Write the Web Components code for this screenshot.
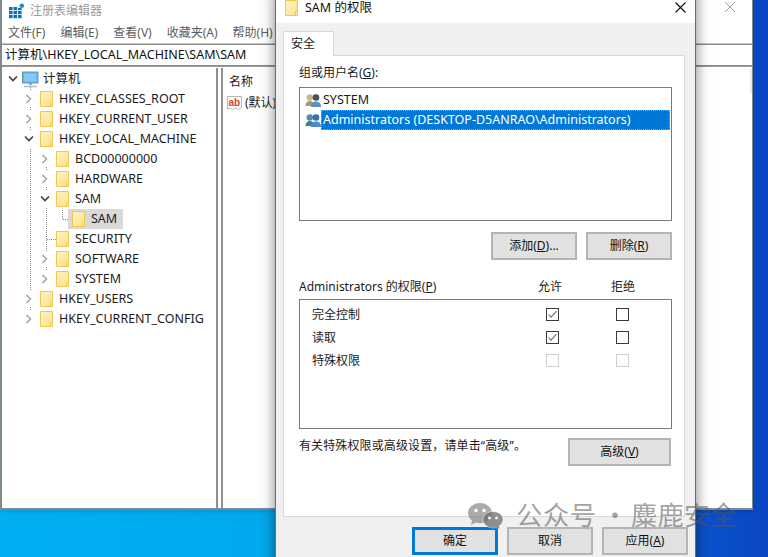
<!DOCTYPE html>
<html lang="zh-CN"><head><meta charset="utf-8"><title>SAM 的权限</title>
<style>
html,body{margin:0;padding:0;width:768px;height:557px;overflow:hidden}
body{font:12.5px/16px "Noto Sans","Noto Sans CJK SC",sans-serif;color:#1a1a1a}
</style></head><body>
<win-desktop>
  <reg-window></reg-window>
  <perm-dialog></perm-dialog>
  <water-mark></water-mark>
</win-desktop>
<script>
const def=(name,css,html)=>customElements.define(name,class extends HTMLElement{
  connectedCallback(){ if(this.shadowRoot) return;
    const r=this.attachShadow({mode:'open'});
    const a=k=>this.getAttribute(k)||'';
    r.innerHTML=`<style>${css}</style>`+(typeof html==='function'?html(a,this):html);
  }});

def('win-desktop',`:host{display:block;position:relative;width:768px;height:557px;overflow:hidden;
  background:linear-gradient(90deg,#00b0f2 0,#00a9ee 270px,#0a64d6 600px,#0a46c4 768px)}`,`<slot></slot>`);

def('folder-icon',`:host{display:block;width:14px;height:16px;flex:none}svg{display:block}`,
`<svg width="14" height="16" viewBox="0 0 14 16"><defs><linearGradient id="g" x1="0" y1="0" x2="1" y2="1"><stop offset="0" stop-color="#fff3c4"/><stop offset="1" stop-color="#fde08a"/></linearGradient></defs>
<path d="M.5.5h12v15H.5z" fill="url(#g)" stroke="#eec84f"/><path d="M10.500 15.500v-4h2.500" fill="#fbe9a8" stroke="#eec84f"/></svg>`);

def('tree-row',`:host{display:flex;align-items:center;height:20px;white-space:nowrap;color:#1c1c1c;font-size:12.500px}
.c{width:14px;flex:none;display:flex;justify-content:center}
.lab{margin-left:5px;padding-right:6px}
:host([sel]) .wrap{background:#d9d9d9}
.wrap{display:flex;align-items:center;height:20px;padding-left:4px}
svg{display:block}`,
(a)=>{
  const lvl=+a('level')||0, st=a('state');
  const pad=(lvl*16)+20;
  const chev= st==='open'
   ? `<svg width="10" height="8" viewBox="0 0 10 8"><path d="M1 1.500 5 5.500 9 1.500" fill="none" stroke="#404040" stroke-width="1.600"/></svg>`
   : st==='closed' ? `<svg width="8" height="10" viewBox="0 0 8 10"><path d="M1.500 1 5.500 5 1.500 9" fill="none" stroke="#a8a8a8" stroke-width="1.600"/></svg>` : '';
  return `<div class="c" style="margin-left:${pad}px">${chev}</div>
  <div class="wrap"><folder-icon></folder-icon><span class="lab">${a('label')}</span></div>`;
});

def('reg-window',`:host{display:flex;flex-direction:column;position:absolute;left:0;top:-1px;width:753px;height:511px;box-sizing:border-box;
  background:#fff;border:solid #7d8a92;border-width:0 1px 2px 2px;box-shadow:0 0 6px rgba(0,0,0,.25)}
.title{height:23px;flex:none;display:flex;align-items:center;position:relative;color:#9b9b9b;font-size:12px;padding-left:7px;gap:5px}
.title .x{position:absolute;left:722px;top:2px}
.menu{height:22px;flex:none;display:flex;align-items:center;gap:15px;padding-left:6px;color:#5c5c5c;font-size:12px}
.addr{height:20px;flex:none;border:solid #8a8a8a;border-width:1px 0 1px;display:flex;align-items:center;padding-left:3px;color:#111;font-size:12.500px;white-space:nowrap;box-shadow:0 1px 0 #9a9a9a,0 -1px 0 #c4c4c4}
.body{flex:1;display:flex;min-height:0;margin-top:2px}
.tree{flex:none;border-right:2px solid #8f8f94;position:relative;padding-top:1px;box-sizing:border-box;width:216px}
.tree svg.lines{position:absolute;left:0;top:1px}
.split{width:3px;flex:none;border-right:2px solid #8f8f94;background:#fff}
.list{flex:1;position:relative;padding:5px 0 0 6px;font-size:12px;color:#222}
.hd{height:17px;display:flex;align-items:center}
.val{display:flex;align-items:center;gap:2px;margin-top:5px;margin-left:-2px;white-space:nowrap}
.sb{position:absolute;right:0;top:1px;width:2px;height:24px;background:#e8e8e8}
.root{display:flex;align-items:center;height:20px;white-space:nowrap;font-size:12.500px;color:#1c1c1c}
`,
()=>`<div class="title">
<svg width="16" height="16" viewBox="0 0 16 16"><g fill="#0a72b8"><rect x="0" y="4" width="3.600" height="3.200"/><rect x="4.500" y="4" width="3.600" height="3.200"/><rect x="9" y="5" width="3.600" height="2.200"/><rect x="0" y="8" width="3.600" height="3.200"/><rect x="4.500" y="8" width="3.600" height="3.200"/><rect x="9" y="8" width="3.600" height="3.200"/><rect x="0" y="12" width="3.600" height="3.200"/><rect x="4.500" y="12" width="3.600" height="3.200"/><rect x="9" y="12" width="3.600" height="3.200"/></g><circle cx="12.800" cy="2.800" r="2.300" fill="#1e8fd0"/></svg>
<span>注册表编辑器</span>
<svg class="x" width="12" height="12" viewBox="0 0 12 12"><path d="M1 1 11 11M11 1 1 11" stroke="#a0a0a0" stroke-width="1"/></svg>
</div>
<div class="menu"><span>文件(F)</span><span>编辑(E)</span><span>查看(V)</span><span>收藏夹(A)</span><span>帮助(H)</span></div>
<div class="addr">计算机\\HKEY_LOCAL_MACHINE\\SAM\\SAM</div>
<div class="body">
<div class="tree">
<svg class="lines" width="214" height="300" viewBox="0 0 214 300" fill="none" stroke="#8a8a8a" stroke-dasharray="1 1">
<path d="M28.500 18v4M28.500 38v4M28.500 58v4M28.500 80v142M28.500 238v4M44.500 98v4M44.500 118v4M44.500 139v43M45 170.500h9M60.500 141v9M61 150.500h6M44.500 198v4"/>
</svg>
<div class="root"><svg style="margin-left:6px;flex:none" width="10" height="8" viewBox="0 0 10 8"><path d="M1 1.500 5 5.500 9 1.500" fill="none" stroke="#404040" stroke-width="1.600"/></svg>
<svg style="margin-left:4px;flex:none" width="17" height="17" viewBox="0 0 17 17"><rect x=".5" y="1" width="15.500" height="11" fill="#5bb8ee" stroke="#6f95ad"/><rect x="2" y="2.500" width="12.500" height="8" fill="#7ecbf5"/><path d="M7 12h3v2H7z" fill="#8aa5b5"/><path d="M2 15.500h13" stroke="#a9bcc8" stroke-width="1.500"/></svg>
<span style="margin-left:4px;">计算机</span></div>
<tree-row level="0" state="closed" label="HKEY_CLASSES_ROOT"></tree-row>
<tree-row level="0" state="closed" label="HKEY_CURRENT_USER"></tree-row>
<tree-row level="0" state="open" label="HKEY_LOCAL_MACHINE"></tree-row>
<tree-row level="1" state="closed" label="BCD00000000"></tree-row>
<tree-row level="1" state="closed" label="HARDWARE"></tree-row>
<tree-row level="1" state="open" label="SAM"></tree-row>
<tree-row level="2" sel label="SAM"></tree-row>
<tree-row level="1" label="SECURITY"></tree-row>
<tree-row level="1" state="closed" label="SOFTWARE"></tree-row>
<tree-row level="1" state="closed" label="SYSTEM"></tree-row>
<tree-row level="0" state="closed" label="HKEY_USERS"></tree-row>
<tree-row level="0" state="closed" label="HKEY_CURRENT_CONFIG"></tree-row>
</div>
<div class="split"></div>
<div class="list"><div class="hd">名称</div>
<div class="val"><svg width="16" height="15" viewBox="0 0 16 15"><path d="M.5.500h14v11l-3 2-3-1.500-3 1.500-3-1.500-2 1z" fill="#fff" stroke="#b8b8b8"/><text x="1.500" y="10" font-family="Liberation Sans,sans-serif" font-weight="700" font-size="10" fill="#d8452a">ab</text></svg><span>(默认)</span></div>
<div class="sb"></div></div>
</div>`);

def('win-button',`:host{display:flex;align-items:center;justify-content:center;box-sizing:border-box;width:86px;height:28px;background:#e1e1e1;border:2px solid #b4b4b4;color:#111;font-size:12px;flex:none;white-space:nowrap}
:host([primary]){border:3px solid #0078d7}`,`<span><slot></slot></span>`);

def('win-check',`:host{display:block;width:13px;height:13px;flex:none}svg{display:block}`,
(a,el)=>{const d=el.hasAttribute('disabled'),c=el.hasAttribute('checked');
 return `<svg width="13" height="13" viewBox="0 0 13 13"><rect x=".5" y=".5" width="12" height="12" fill="#fff" stroke="${d?'#cfcfcf':'#3a3a3a'}"/>${c?'<path d="M2.500 6.500 5 9.200 10.500 3.200" fill="none" stroke="#6a6a6a" stroke-width="1.100"/>':''}</svg>`});

def('perm-row',`:host{display:flex;align-items:center;height:23px;font-size:12px;color:#1a1a1a}
.l{width:246px;padding-left:12px;box-sizing:border-box;flex:none}
.g{width:70px;flex:none}`,
(a)=>{const f=n=>{const v=a(n);return `<win-check ${v.includes('c')?'checked':''} ${v.includes('d')?'disabled':''}></win-check>`};
 return `<span class="l">${a('label')}</span><span class="g">${f('allow')}</span><span>${f('deny')}</span>`});

def('user-icon',`:host{display:block;width:16px;height:15px;flex:none}svg{display:block}`,
(a)=>{const c=a('kind')==='sys'?['#c9b98a','#9aa06a','#4a4f58','#5b90c4']:['#4f8fa8','#3f7f96','#3f6fa8','#4a8ad0'];
return `<svg width="16" height="15" viewBox="0 0 16 15"><circle cx="4.800" cy="4.500" r="3.200" fill="${c[0]}"/><path d="M.5 13c0-3.500 2-5 4.300-5s4.300 1.500 4.300 5z" fill="${c[1]}"/><circle cx="11" cy="4.500" r="3.300" fill="${c[2]}"/><path d="M6 14c0-4 2.200-5.500 5-5.500s5 1.500 5 5.500z" fill="${c[3]}"/></svg>`});

def('user-row',`:host{display:flex;align-items:center;height:20px;font-size:12.500px;color:#1a1a1a;white-space:nowrap}
.ic{margin:0 0 0 5px}
.t{flex:1;height:20px;display:flex;align-items:center;padding-left:2px;margin-right:1px}
:host([sel]) .t{background:#0078d7;color:#fff;outline:1px dotted #d8a24c;outline-offset:-1px}`,
(a)=>`<user-icon class="ic" kind="${a('kind')}"></user-icon><div class="t">${a('label')}</div>`);

def('perm-dialog',`:host{display:flex;flex-direction:column;position:absolute;left:275px;top:-10px;width:421px;height:580px;box-sizing:border-box;background:#f0f0f0;border:1px solid #6d6d6d;box-shadow:0 0 13px rgba(0,0,0,.5);font-size:12px}
.title{height:32px;flex:none;background:#fff;display:flex;align-items:flex-end;position:relative;padding:0 0 7px 9px;box-sizing:border-box;gap:6px;font-size:12.500px;color:#111}
.title .x{position:absolute;right:9px;top:11px}
.tabs{height:32px;flex:none;display:flex;align-items:flex-end;padding-left:7px}
.tab{width:51px;height:25px;box-sizing:border-box;background:#fff;border:1px solid #d9d9d9;border-bottom:0;padding:4px 0 0 7px;margin-bottom:-1px;position:relative;z-index:1;font-size:12px}
.panel{margin:0 10px 0 7px;height:462px;flex:none;box-sizing:border-box;background:#fff;border:1px solid #d9d9d9;padding:9px 12px 0 15px;display:flex;flex-direction:column}
.lbl{height:16px;line-height:16px;flex:none}
.box{border:1px solid #7a7a7a;box-sizing:border-box;background:#fff;flex:none}
.users{margin-top:6px;height:134px;padding-top:2px}
.btns{display:flex;gap:9px;justify-content:flex-end;margin-top:11px;flex:none}
.ph{display:flex;margin-top:19px;height:16px;align-items:center;flex:none}
.ph .a{width:239px}.ph .b{width:73px}
.perms{margin-top:4px;height:130px;padding-top:3px}
.adv{display:flex;justify-content:space-between;margin-top:9px;flex:none;padding-right:1px}
.adv span{letter-spacing:.12px}
.adv win-button{width:103px}
.foot{flex:1;display:flex;justify-content:flex-end;gap:9px;padding:10px 7px 0 0}`,
()=>`<div class="title"><folder-icon></folder-icon><span>SAM 的权限</span>
<svg class="x" width="11" height="11" viewBox="0 0 11 11"><path d="M.5.500 10.500 10.500M10.500.500.500 10.500" stroke="#111" stroke-width="1.100"/></svg></div>
<div class="tabs"><div class="tab">安全</div></div>
<div class="panel">
<div class="lbl">组或用户名(<u>G</u>):</div>
<div class="box users">
 <user-row kind="sys" label="SYSTEM"></user-row>
 <user-row kind="adm" sel label="Administrators (DESKTOP-D5ANRAO\\Administrators)"></user-row>
</div>
<div class="btns"><win-button>添加(<u>D</u>)...</win-button><win-button>删除(<u>R</u>)</win-button></div>
<div class="ph"><span class="a">Administrators 的权限(<u>P</u>)</span><span class="b">允许</span><span>拒绝</span></div>
<div class="box perms">
 <perm-row label="完全控制" allow="c" deny=""></perm-row>
 <perm-row label="读取" allow="c" deny=""></perm-row>
 <perm-row label="特殊权限" allow="d" deny="d"></perm-row>
</div>
<div class="adv"><span>有关特殊权限或高级设置，请单击“高级”。</span><win-button>高级(<u>V</u>)</win-button></div>
</div>
<div class="foot"><win-button primary>确定</win-button><win-button>取消</win-button><win-button>应用(<u>A</u>)</win-button></div>`);

def('water-mark',`:host{position:absolute;left:467px;top:498px;display:flex;align-items:center;gap:12px;pointer-events:none;height:32px;white-space:nowrap;color:rgba(85,85,85,.55);font:26.400px/32px "Noto Sans CJK SC",sans-serif}
svg{display:block;flex:none;margin-top:4px}.dot{margin:0 3px 0 5px}.a{letter-spacing:.5px}`,
`<svg width="37" height="30" viewBox="0 0 37 30"><path d="M13 2C6.400 2 1 6.400 1 12c0 3 1.600 5.700 4 7.500L4 24l4.800-2.400c1.300.4 2.700.6 4.200.6 6.600 0 12-4.500 12-10.100S19.600 2 13 2z" fill="rgba(120,120,120,.62)"/><circle cx="9" cy="9.500" r="1.700" fill="#fff"/><circle cx="17" cy="9.500" r="1.700" fill="#fff"/><path d="M26 10.500c-5.500 0-10 3.600-10 8.200s4.500 8.200 10 8.200c1.100 0 2.200-.2 3.200-.4l3.800 2-.9-3.500c2.400-1.500 3.900-3.800 3.900-6.300 0-4.600-4.500-8.200-10-8.200z" fill="rgba(110,110,110,.75)" stroke="#fff" stroke-opacity=".6" stroke-width=".8"/><circle cx="22.500" cy="17" r="1.400" fill="#fff"/><circle cx="29.500" cy="17" r="1.400" fill="#fff"/></svg>
<span><span class="a">公众号</span><span class="dot">·</span>麋鹿安全</span>`);
</script>
</body></html>
